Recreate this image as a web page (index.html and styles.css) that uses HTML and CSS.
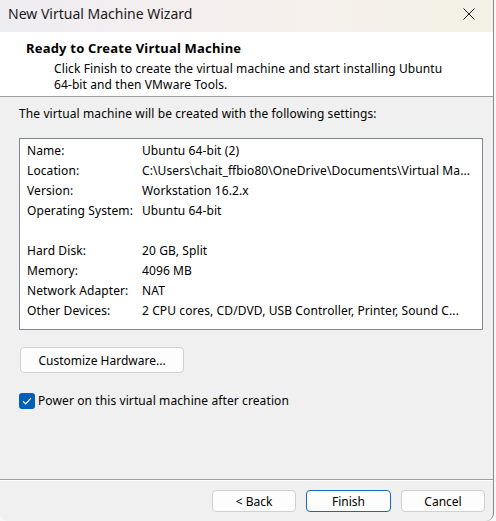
FILE: index.html
```html
<!DOCTYPE html>
<html lang="en">
<head>
<meta charset="utf-8">
<title>New Virtual Machine Wizard</title>
<link rel="stylesheet" href="styles.css">
</head>
<body>
<div class="window">
  <div class="titlebar">
    <span class="title">New Virtual Machine Wizard</span>
    <button class="close" aria-label="Close">
      <svg width="12" height="12" viewBox="0 0 12 12"><path d="M0.5 0.5 L11.5 11.5 M11.5 0.5 L0.5 11.5" stroke="#1a1a1a" stroke-width="1" fill="none"/></svg>
    </button>
  </div>

  <div class="header">
    <div class="header-title">Ready to Create Virtual Machine</div>
    <div class="header-text">Click Finish to create the virtual machine and start installing Ubuntu<br>64-bit and then VMware Tools.</div>
  </div>

  <div class="content">
    <div class="intro">The virtual machine will be created with the following settings:</div>
    <div class="summary">
      <div class="row"><span class="key">Name:</span><span class="val">Ubuntu 64-bit (2)</span></div>
      <div class="row"><span class="key">Location:</span><span class="val">C:\Users\chait_ffbio80\OneDrive\Documents\Virtual Ma...</span></div>
      <div class="row"><span class="key">Version:</span><span class="val">Workstation 16.2.x</span></div>
      <div class="row"><span class="key">Operating System:</span><span class="val">Ubuntu 64-bit</span></div>
      <div class="row"></div>
      <div class="row"><span class="key">Hard Disk:</span><span class="val">20 GB, Split</span></div>
      <div class="row"><span class="key">Memory:</span><span class="val">4096 MB</span></div>
      <div class="row"><span class="key">Network Adapter:</span><span class="val">NAT</span></div>
      <div class="row"><span class="key">Other Devices:</span><span class="val">2 CPU cores, CD/DVD, USB Controller, Printer, Sound C...</span></div>
    </div>
    <button class="btn btn-customize">Customize Hardware...</button>
    <label class="check">
      <span class="box">
        <svg width="10" height="8" viewBox="0 0 10 8"><path d="M1 4.2 L3.7 6.8 L9 1.2" stroke="#ffffff" stroke-width="1.2" fill="none"/></svg>
      </span>
      <span>Power on this virtual machine after creation</span>
    </label>
  </div>

  <div class="footer">
    <button class="btn btn-nav">&lt; Back</button>
    <button class="btn btn-nav btn-default">Finish</button>
    <button class="btn btn-nav">Cancel</button>
  </div>
</div>
</body>
</html>
```
FILE: styles.css
```css
* { box-sizing: border-box; }

html, body {
  margin: 0;
  padding: 0;
  height: 100%;
}

body {
  background: #f7f7f7;
  font-family: "Noto Sans", "Open Sans", sans-serif;
  font-size: 12px;
  letter-spacing: 0.1px;
  color: #000;
  overflow: hidden;
}

.window {
  width: 494px;
  height: 521px;
  display: flex;
  flex-direction: column;
  background: #f0f0f0;
  border-right: 1px solid #8a8a8a;
  border-radius: 0 0 8px 8px;
  overflow: hidden;
}

/* title bar */
.titlebar {
  height: 32px;
  flex: none;
  display: flex;
  align-items: flex-start;
  justify-content: space-between;
  background: linear-gradient(90deg, #eeedf2 0%, #f5eeef 35%, #f6f1ec 65%, #f2f1e4 100%);
}

.title {
  padding: 4px 0 0 8px;
  font-size: 14px;
  letter-spacing: 0;
  line-height: 20px;
  color: #1a1a1a;
}

.close {
  width: 46px;
  height: 26px;
  margin: 1px 1px 0 0;
  border: 0;
  background: transparent;
  padding: 0;
  display: flex;
  align-items: center;
  justify-content: center;
}

/* white wizard header */
.header {
  height: 65px;
  flex: none;
  background: #ffffff;
  border-bottom: 1px solid #a0a0a0;
  padding: 8px 0 0 26px;
}

.header-title {
  font-weight: bold;
  font-size: 13px;
  letter-spacing: 0.2px;
  line-height: 16px;
}

.header-text {
  padding: 5px 0 0 28px;
  line-height: 16px;
}

/* settings area */
.content {
  flex: 1;
  padding: 9px 11px 0 19px;
  display: flex;
  flex-direction: column;
  align-items: flex-start;
  border-bottom: 1px solid #a0a0a0;
  box-shadow: 0 1px 0 #ffffff;
}

.intro {
  line-height: 16px;
}

.summary {
  margin-top: 16px;
  width: 464px;
  height: 192px;
  background: #ffffff;
  border: 1px solid #828790;
  padding: 2px 0 0 7px;
}

.row {
  display: flex;
  height: 20px;
  line-height: 20px;
  white-space: nowrap;
}

.key {
  width: 115px;
  flex: none;
}

.val {
  overflow: hidden;
}

.btn {
  font: inherit;
  color: #000;
  background: #fdfdfd;
  border: 1px solid #d0d0d0;
  border-radius: 4px;
  padding: 0;
}

.btn-customize {
  margin: 17px 0 0 1px;
  width: 164px;
  height: 26px;
}

.check {
  margin-top: 19px;
  display: flex;
  align-items: center;
  gap: 3px;
}

.box {
  width: 16px;
  height: 16px;
  border-radius: 3px;
  background: #005fb8;
  display: flex;
  align-items: center;
  justify-content: center;
}

/* navigation buttons */
.footer {
  height: 41px;
  flex: none;
  display: flex;
  justify-content: flex-end;
  gap: 10px;
  padding: 10px 8px 0 0;
}

.btn-nav {
  width: 84px;
  height: 22px;
}

.btn-default {
  width: 85px;
  border-color: #0f6cbd;
}
```
